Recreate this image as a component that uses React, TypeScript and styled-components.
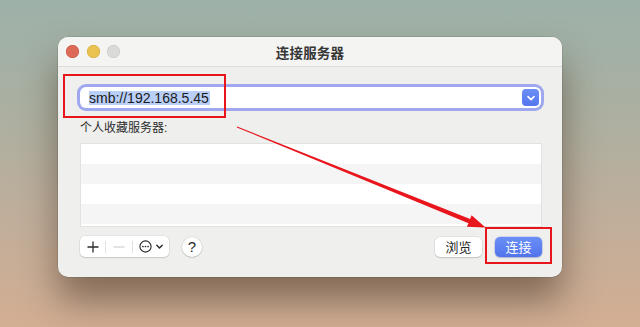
import React from "react";
import styled, { createGlobalStyle } from "styled-components";

const GlobalStyle = createGlobalStyle`
  html, body {
    margin: 0;
    padding: 0;
    overflow: hidden;
  }
  body {
    font-family: "Liberation Sans", "Noto Sans CJK SC", sans-serif;
  }
`;

const Stage = styled.div`
  position: relative;
  box-sizing: border-box;
  width: 640px;
  height: 327px;
  padding: 37px 0 0 58px;
  background: linear-gradient(180deg, #9db1a9 0%, #a9b0a2 30%, #bfae9b 65%, #d3ae93 100%);
`;

const Window = styled.div`
  width: 504px;
  height: 240px;
  border-radius: 10px;
  background: #efefed;
  display: flex;
  flex-direction: column;
  overflow: hidden;
  box-shadow: 0 0 0 0.5px rgba(0, 0, 0, 0.18), 0 24px 36px rgba(60, 42, 28, 0.5);
`;

const TitleBar = styled.div`
  height: 29px;
  border-bottom: 1px solid #dcdcda;
  background: #f4f4f3;
  display: grid;
  grid-template-columns: 1fr auto 1fr;
  align-items: center;
  padding: 0 8px;
`;

const Lights = styled.div`
  display: flex;
  gap: 7.7px;
`;

const Light = styled.span<{ $color: string; $edge: string }>`
  width: 13px;
  height: 13px;
  border-radius: 50%;
  background: ${(p) => p.$color};
  box-shadow: inset 0 0 0 0.5px ${(p) => p.$edge};
`;

const Title = styled.div`
  font-size: 13.5px;
  font-weight: 700;
  color: #363636;
  letter-spacing: 0.2px;
`;

const Content = styled.div`
  flex: 1;
  display: flex;
  flex-direction: column;
  padding: 20px 20px 20px 22px;
`;

const Field = styled.div`
  height: 21px;
  margin-right: 1px;
  border-radius: 6px;
  background: #fff;
  box-shadow: 0 0 0 3px rgba(128, 140, 238, 0.72);
  display: flex;
  align-items: center;
  padding: 0 2px 0 9px;
`;

const Selected = styled.span`
  font-size: 14px;
  line-height: 14px;
  color: #1a1a1a;
  background: #b9cff7;
  padding: 0 1px 0 0;
`;

const DropButton = styled.div`
  margin-left: auto;
  width: 17px;
  height: 17px;
  border-radius: 4px;
  background: linear-gradient(180deg, #6c8ef6 0%, #5576ee 100%);
  display: flex;
  align-items: center;
  justify-content: center;
`;

const Label = styled.div`
  margin-top: 12px;
  font-size: 12px;
  line-height: 16px;
  color: #2c2c2c;
`;

const List = styled.div`
  margin-top: 7px;
  height: 84px;
  box-sizing: border-box;
  border: 1px solid #e2e2e0;
  background: #fff;
  overflow: hidden;
`;

const Row = styled.div<{ $alt: boolean }>`
  height: 20px;
  background: ${(p) => (p.$alt ? "#f4f5f4" : "#ffffff")};
`;

const BottomBar = styled.div`
  margin-top: 9px;
  height: 21px;
  display: flex;
  align-items: center;
`;

const Segmented = styled.div`
  height: 21px;
  display: flex;
  align-items: center;
  border-radius: 5px;
  background: #fff;
  box-shadow: 0 0 0 0.5px rgba(0, 0, 0, 0.1), 0 1px 1.5px rgba(0, 0, 0, 0.12);
`;

const Segment = styled.div<{ $w: number }>`
  width: ${(p) => p.$w}px;
  height: 100%;
  display: flex;
  align-items: center;
  justify-content: center;
  gap: 3px;
`;

const Divider = styled.span`
  width: 1px;
  height: 12px;
  background: #e1e1e1;
`;

const HelpButton = styled.div`
  margin-left: 13px;
  width: 20px;
  height: 20px;
  border-radius: 50%;
  background: #fff;
  box-shadow: 0 0 0 0.5px rgba(0, 0, 0, 0.1), 0 1px 1.5px rgba(0, 0, 0, 0.14);
  display: flex;
  align-items: center;
  justify-content: center;
  font-size: 15px;
  color: #2a2a2a;
`;

const Spacer = styled.div`
  flex: 1;
`;

const Button = styled.div<{ $primary?: boolean }>`
  width: 47px;
  height: 20px;
  margin-left: ${(p) => (p.$primary ? "13px" : "0")};
  border-radius: 5px;
  display: flex;
  align-items: center;
  justify-content: center;
  font-size: 13px;
  color: ${(p) => (p.$primary ? "#fff" : "#262626")};
  background: ${(p) =>
    p.$primary ? "linear-gradient(180deg, #6b8ff6 0%, #5174ec 100%)" : "#fff"};
  box-shadow: ${(p) =>
    p.$primary
      ? "0 0 0 0.5px rgba(40, 70, 200, 0.3), 0 1px 1.5px rgba(0, 0, 0, 0.15)"
      : "0 0 0 0.5px rgba(0, 0, 0, 0.1), 0 1px 1.5px rgba(0, 0, 0, 0.14)"};
`;

const RedBox = styled.div<{ $x: number; $y: number; $w: number; $h: number; $t: number }>`
  position: absolute;
  left: ${(p) => p.$x}px;
  top: ${(p) => p.$y}px;
  width: ${(p) => p.$w}px;
  height: ${(p) => p.$h}px;
  box-sizing: border-box;
  border: ${(p) => p.$t}px solid #e8151d;
`;

const Overlay = styled.svg`
  position: absolute;
  left: 0;
  top: 0;
  pointer-events: none;
`;

const Chevron = ({ color, size }: { color: string; size: number }) => (
  <svg width={size} height={size} viewBox="0 0 10 10">
    <path d="M2 3.6 L5 6.6 L8 3.6" fill="none" stroke={color} strokeWidth="1.6" strokeLinecap="round" strokeLinejoin="round" />
  </svg>
);

const App = () => {
  return (
    <>
      <GlobalStyle />
      <Stage>
        <Window>
          <TitleBar>
            <Lights>
              <Light $color="#dd6a56" $edge="#c4513f" />
              <Light $color="#e9c24f" $edge="#cfa73a" />
              <Light $color="#dadad9" $edge="#c6c6c5" />
            </Lights>
            <Title>连接服务器</Title>
            <span />
          </TitleBar>
          <Content>
            <Field>
              <Selected>smb://192.168.5.45</Selected>
              <DropButton>
                <Chevron color="#fff" size={10} />
              </DropButton>
            </Field>
            <Label>个人收藏服务器:</Label>
            <List>
              {[0, 1, 2, 3, 4].map((i) => (
                <Row key={i} $alt={i % 2 === 1} />
              ))}
            </List>
            <BottomBar>
              <Segmented>
                <Segment $w={25}>
                  <svg width="12" height="12" viewBox="0 0 12 12">
                    <path d="M6 0.5 V11.5 M0.5 6 H11.5" stroke="#2a2a2a" strokeWidth="1.3" />
                  </svg>
                </Segment>
                <Divider />
                <Segment $w={26}>
                  <svg width="12" height="12" viewBox="0 0 12 12">
                    <path d="M0.5 6 H11.5" stroke="#c8c8c8" strokeWidth="1.2" />
                  </svg>
                </Segment>
                <Divider />
                <Segment $w={36}>
                  <svg width="13" height="13" viewBox="0 0 13 13">
                    <circle cx="6.5" cy="6.5" r="5.6" fill="none" stroke="#2a2a2a" strokeWidth="1.15" />
                    <circle cx="3.9" cy="6.5" r="0.85" fill="#2a2a2a" />
                    <circle cx="6.5" cy="6.5" r="0.85" fill="#2a2a2a" />
                    <circle cx="9.1" cy="6.5" r="0.85" fill="#2a2a2a" />
                  </svg>
                  <Chevron color="#2a2a2a" size={9} />
                </Segment>
              </Segmented>
              <HelpButton>?</HelpButton>
              <Spacer />
              <Button>浏览</Button>
              <Button $primary>连接</Button>
            </BottomBar>
          </Content>
        </Window>

        <RedBox $x={63} $y={74} $w={163} $h={44} $t={2} />
        <RedBox $x={485} $y={227} $w={67} $h={37} $t={2.5} />
        <Overlay width={640} height={327} viewBox="0 0 640 327">
          <polygon
            points="236.8,127.4 237.2,126.6 470.1,218.9 471.6,215.3 485.5,227.4 466.8,226.8 468.5,223.2"
            fill="#e8151d"
          />
        </Overlay>
      </Stage>
    </>
  );
};

export default App;
